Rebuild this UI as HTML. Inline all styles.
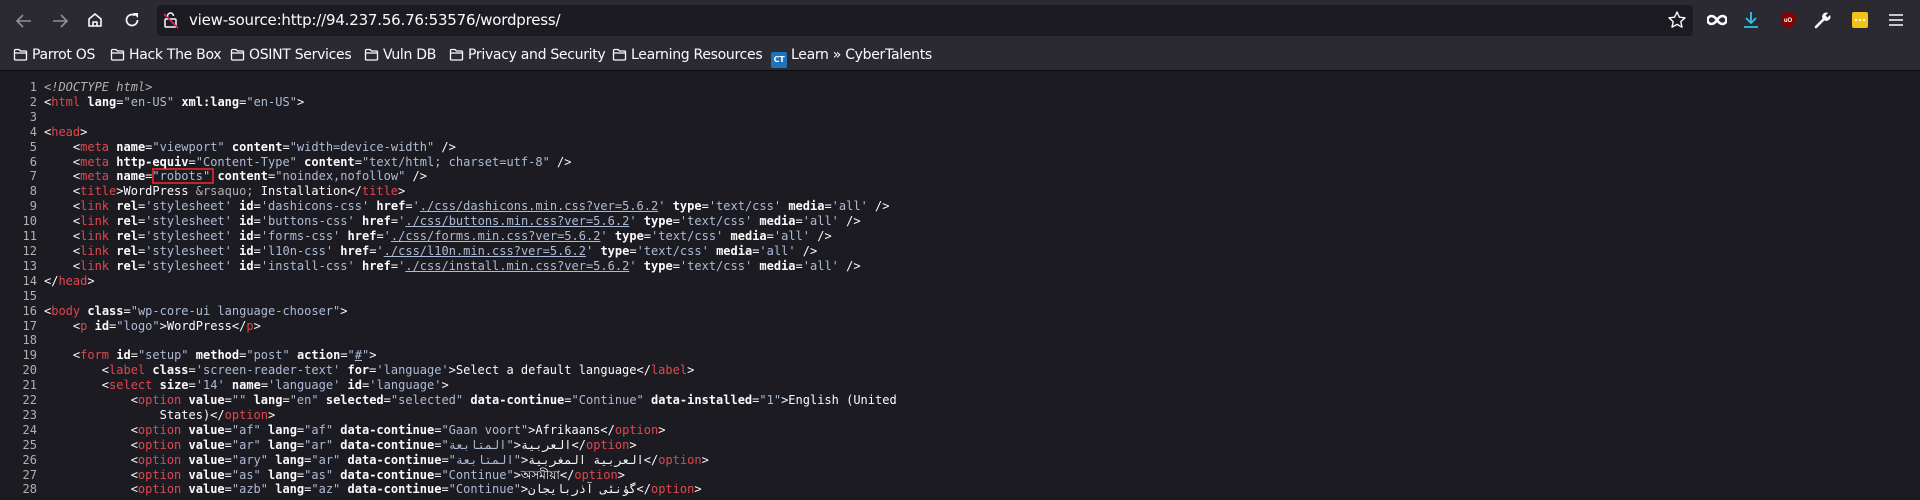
<!DOCTYPE html>
<html><head><meta charset="utf-8"><style>
*{margin:0;padding:0;box-sizing:border-box}
body{width:1920px;height:500px;overflow:hidden;background:#1c1b22;font-family:"Liberation Sans","DejaVu Sans",sans-serif;color:#fbfbfe;position:relative}
.tb{position:absolute;left:0;top:0;width:1920px;height:71px;background:#2b2a33;border-bottom:1px solid #0c0c0d}
.url{position:absolute;left:157px;top:5px;width:1536px;height:31px;background:#1c1b22;border-radius:4px}
.urltext{position:absolute;left:189px;top:11px;font-size:15px;color:#fbfbfe;font-family:"DejaVu Sans",sans-serif;letter-spacing:-0.2px}
.ic{position:absolute}
.bm{position:absolute;top:47px;font-size:14px;font-family:"DejaVu Sans",sans-serif;color:#fbfbfe;white-space:nowrap;letter-spacing:-0.3px}
.bm svg{vertical-align:-2px;margin-right:4px}
.code{position:absolute;left:0;top:80px;font-family:"DejaVu Sans Mono",monospace;font-size:12px;line-height:14.9px;white-space:pre;color:#fbfbfe}
.ln{display:inline-block;width:37px;text-align:right;color:#b1b1b3;margin-right:7px}
.t{color:#e0474f}
.a{font-weight:bold}
.v{color:#adbcd6}
.c{color:#b1b1b3;font-style:italic}
.e{color:#b1b1b3}
.u{color:#adbcd6;text-decoration:underline}
.ar{unicode-bidi:isolate}
</style></head><body>
<div class="tb"></div>
<svg class="ic" style="left:14px;top:12px" width="20" height="18" viewBox="0 0 20 18"><path d="M17 9H3M9 3L3 9l6 6" stroke="#8f8f9d" stroke-width="1.6" fill="none"/></svg>
<svg class="ic" style="left:50px;top:12px" width="20" height="18" viewBox="0 0 20 18"><path d="M3 9h14M11 3l6 6-6 6" stroke="#8f8f9d" stroke-width="1.6" fill="none"/></svg>
<svg class="ic" style="left:86px;top:11px" width="18" height="18" viewBox="0 0 18 18"><path d="M3 8l6-5 6 5v7H3z M7 15v-4h4v4" stroke="#fbfbfe" stroke-width="1.6" fill="none" stroke-linejoin="round"/></svg>
<svg class="ic" style="left:123px;top:11px" width="18" height="18" viewBox="0 0 18 18"><path d="M14.5 9A5.5 5.5 0 1 1 12 4.4" stroke="#fbfbfe" stroke-width="1.7" fill="none"/><path d="M10 2h5v5z" fill="#fbfbfe"/></svg>
<div class="url"></div>
<svg class="ic" style="left:163px;top:11px" width="16" height="18" viewBox="0 0 16 18"><rect x="2" y="8" width="11" height="8" rx="1" stroke="#fbfbfe" stroke-width="1.5" fill="none"/><path d="M4.5 8V5a3 3 0 0 1 6 0" stroke="#fbfbfe" stroke-width="1.5" fill="none"/><path d="M1 3l14 14" stroke="#e22850" stroke-width="1.6"/></svg>
<div class="urltext">view-source:http://94.237.56.76:53576/wordpress/</div>
<svg class="ic" style="left:1667px;top:10px" width="20" height="20" viewBox="0 0 20 20"><path d="M10 2l2.4 5.2 5.6.6-4.2 3.8 1.2 5.6L10 14.4 5 17.2l1.2-5.6L2 7.8l5.6-.6z" stroke="#fbfbfe" stroke-width="1.4" fill="none" stroke-linejoin="round"/></svg>
<svg class="ic" style="left:1707px;top:13px" width="20" height="14" viewBox="0 0 20 14"><path d="M10 7c-2-3-3.5-4-5.5-4a4 4 0 0 0 0 8c2 0 3.5-1 5.5-4zm0 0c2-3 3.5-4 5.5-4a4 4 0 0 1 0 8c-2 0-3.5-1-5.5-4z" stroke="#fbfbfe" stroke-width="2.6" fill="none"/></svg>
<svg class="ic" style="left:1742px;top:10px" width="18" height="20" viewBox="0 0 18 20"><path d="M9 2v11M4 8l5 5 5-5M2 17h14" stroke="#2bc6e8" stroke-width="1.8" fill="none"/></svg>
<svg class="ic" style="left:1780px;top:11px" width="16" height="18" viewBox="0 0 16 18"><path d="M8 1l7 2.5v6c0 4-3.5 6.5-7 8-3.5-1.5-7-4-7-8v-6z" fill="#800"/><text x="8" y="11" font-size="6" fill="#fff" text-anchor="middle" font-family="Liberation Sans" font-weight="bold">uO</text></svg>
<svg class="ic" style="left:1814px;top:11px" width="18" height="18" viewBox="0 0 18 18"><path d="M2 16l8-8" stroke="#fbfbfe" stroke-width="2.6" stroke-linecap="round"/><path d="M9 8a4 4 0 0 1 5-6l-2.5 2.5 2 2L16 4a4 4 0 0 1-6 5z" fill="#fbfbfe"/></svg>
<div class="ic" style="left:1852px;top:12px;width:16px;height:16px;background:#f0c419;border-radius:2px"><div style="position:absolute;left:3px;top:7px;width:10px;height:2px;border-top:2px dotted #fff"></div></div>
<svg class="ic" style="left:1888px;top:12px" width="16" height="16" viewBox="0 0 16 16"><path d="M1 3h14M1 8h14M1 13h14" stroke="#fbfbfe" stroke-width="1.5"/></svg>
<div class="bm" style="left:13px"><svg width="15" height="13" viewBox="0 0 15 13"><path d="M1.5 2.5a1 1 0 0 1 1-1h3.5l1.5 1.5h5a1 1 0 0 1 1 1v7a1 1 0 0 1-1 1h-10a1 1 0 0 1-1-1z M1.5 5h12" stroke="#fbfbfe" stroke-width="1.3" fill="none"/></svg>Parrot OS</div>
<div class="bm" style="left:110px"><svg width="15" height="13" viewBox="0 0 15 13"><path d="M1.5 2.5a1 1 0 0 1 1-1h3.5l1.5 1.5h5a1 1 0 0 1 1 1v7a1 1 0 0 1-1 1h-10a1 1 0 0 1-1-1z M1.5 5h12" stroke="#fbfbfe" stroke-width="1.3" fill="none"/></svg>Hack The Box</div>
<div class="bm" style="left:230px"><svg width="15" height="13" viewBox="0 0 15 13"><path d="M1.5 2.5a1 1 0 0 1 1-1h3.5l1.5 1.5h5a1 1 0 0 1 1 1v7a1 1 0 0 1-1 1h-10a1 1 0 0 1-1-1z M1.5 5h12" stroke="#fbfbfe" stroke-width="1.3" fill="none"/></svg>OSINT Services</div>
<div class="bm" style="left:364px"><svg width="15" height="13" viewBox="0 0 15 13"><path d="M1.5 2.5a1 1 0 0 1 1-1h3.5l1.5 1.5h5a1 1 0 0 1 1 1v7a1 1 0 0 1-1 1h-10a1 1 0 0 1-1-1z M1.5 5h12" stroke="#fbfbfe" stroke-width="1.3" fill="none"/></svg>Vuln DB</div>
<div class="bm" style="left:449px"><svg width="15" height="13" viewBox="0 0 15 13"><path d="M1.5 2.5a1 1 0 0 1 1-1h3.5l1.5 1.5h5a1 1 0 0 1 1 1v7a1 1 0 0 1-1 1h-10a1 1 0 0 1-1-1z M1.5 5h12" stroke="#fbfbfe" stroke-width="1.3" fill="none"/></svg>Privacy and Security</div>
<div class="bm" style="left:612px"><svg width="15" height="13" viewBox="0 0 15 13"><path d="M1.5 2.5a1 1 0 0 1 1-1h3.5l1.5 1.5h5a1 1 0 0 1 1 1v7a1 1 0 0 1-1 1h-10a1 1 0 0 1-1-1z M1.5 5h12" stroke="#fbfbfe" stroke-width="1.3" fill="none"/></svg>Learning Resources</div>
<div class="bm" style="left:771px"><span style="display:inline-block;width:16px;height:16px;background:#1e73be;border-radius:2px;vertical-align:-3px;margin-right:4px;font-size:8px;font-weight:bold;text-align:center;line-height:16px;color:#fff">CT</span>Learn » CyberTalents</div>
<div style="position:absolute;left:152px;top:168px;width:62px;height:16px;border:2px solid #c4232b"></div>
<div class="code"><span class="ln">1</span><span class="c">&lt;!DOCTYPE html&gt;</span>
<span class="ln">2</span>&lt;<span class="t">html</span> <span class="a">lang</span>=<span class="v">"en-US"</span> <span class="a">xml:lang</span>=<span class="v">"en-US"</span>&gt;
<span class="ln">3</span>
<span class="ln">4</span>&lt;<span class="t">head</span>&gt;
<span class="ln">5</span>    &lt;<span class="t">meta</span> <span class="a">name</span>=<span class="v">"viewport"</span> <span class="a">content</span>=<span class="v">"width=device-width"</span> /&gt;
<span class="ln">6</span>    &lt;<span class="t">meta</span> <span class="a">http-equiv</span>=<span class="v">"Content-Type"</span> <span class="a">content</span>=<span class="v">"text/html; charset=utf-8"</span> /&gt;
<span class="ln">7</span>    &lt;<span class="t">meta</span> <span class="a">name</span>=<span class="v">"robots"</span> <span class="a">content</span>=<span class="v">"noindex,nofollow"</span> /&gt;
<span class="ln">8</span>    &lt;<span class="t">title</span>&gt;WordPress <span class="e">&amp;rsaquo;</span> Installation&lt;/<span class="t">title</span>&gt;
<span class="ln">9</span>    &lt;<span class="t">link</span> <span class="a">rel</span>=<span class="v">'stylesheet'</span> <span class="a">id</span>=<span class="v">'dashicons-css'</span> <span class="a">href</span>=<span class="v">'</span><span class="u">./css/dashicons.min.css?ver=5.6.2</span><span class="v">'</span> <span class="a">type</span>=<span class="v">'text/css'</span> <span class="a">media</span>=<span class="v">'all'</span> /&gt;
<span class="ln">10</span>    &lt;<span class="t">link</span> <span class="a">rel</span>=<span class="v">'stylesheet'</span> <span class="a">id</span>=<span class="v">'buttons-css'</span> <span class="a">href</span>=<span class="v">'</span><span class="u">./css/buttons.min.css?ver=5.6.2</span><span class="v">'</span> <span class="a">type</span>=<span class="v">'text/css'</span> <span class="a">media</span>=<span class="v">'all'</span> /&gt;
<span class="ln">11</span>    &lt;<span class="t">link</span> <span class="a">rel</span>=<span class="v">'stylesheet'</span> <span class="a">id</span>=<span class="v">'forms-css'</span> <span class="a">href</span>=<span class="v">'</span><span class="u">./css/forms.min.css?ver=5.6.2</span><span class="v">'</span> <span class="a">type</span>=<span class="v">'text/css'</span> <span class="a">media</span>=<span class="v">'all'</span> /&gt;
<span class="ln">12</span>    &lt;<span class="t">link</span> <span class="a">rel</span>=<span class="v">'stylesheet'</span> <span class="a">id</span>=<span class="v">'l10n-css'</span> <span class="a">href</span>=<span class="v">'</span><span class="u">./css/l10n.min.css?ver=5.6.2</span><span class="v">'</span> <span class="a">type</span>=<span class="v">'text/css'</span> <span class="a">media</span>=<span class="v">'all'</span> /&gt;
<span class="ln">13</span>    &lt;<span class="t">link</span> <span class="a">rel</span>=<span class="v">'stylesheet'</span> <span class="a">id</span>=<span class="v">'install-css'</span> <span class="a">href</span>=<span class="v">'</span><span class="u">./css/install.min.css?ver=5.6.2</span><span class="v">'</span> <span class="a">type</span>=<span class="v">'text/css'</span> <span class="a">media</span>=<span class="v">'all'</span> /&gt;
<span class="ln">14</span>&lt;/<span class="t">head</span>&gt;
<span class="ln">15</span>
<span class="ln">16</span>&lt;<span class="t">body</span> <span class="a">class</span>=<span class="v">"wp-core-ui language-chooser"</span>&gt;
<span class="ln">17</span>    &lt;<span class="t">p</span> <span class="a">id</span>=<span class="v">"logo"</span>&gt;WordPress&lt;/<span class="t">p</span>&gt;
<span class="ln">18</span>
<span class="ln">19</span>    &lt;<span class="t">form</span> <span class="a">id</span>=<span class="v">"setup"</span> <span class="a">method</span>=<span class="v">"post"</span> <span class="a">action</span>=<span class="v">"</span><span class="u">#</span><span class="v">"</span>&gt;
<span class="ln">20</span>        &lt;<span class="t">label</span> <span class="a">class</span>=<span class="v">'screen-reader-text'</span> <span class="a">for</span>=<span class="v">'language'</span>&gt;Select a default language&lt;/<span class="t">label</span>&gt;
<span class="ln">21</span>        &lt;<span class="t">select</span> <span class="a">size</span>=<span class="v">'14'</span> <span class="a">name</span>=<span class="v">'language'</span> <span class="a">id</span>=<span class="v">'language'</span>&gt;
<span class="ln">22</span>            &lt;<span class="t">option</span> <span class="a">value</span>=<span class="v">""</span> <span class="a">lang</span>=<span class="v">"en"</span> <span class="a">selected</span>=<span class="v">"selected"</span> <span class="a">data-continue</span>=<span class="v">"Continue"</span> <span class="a">data-installed</span>=<span class="v">"1"</span>&gt;English (United
<span class="ln">23</span>                States)&lt;/<span class="t">option</span>&gt;
<span class="ln">24</span>            &lt;<span class="t">option</span> <span class="a">value</span>=<span class="v">"af"</span> <span class="a">lang</span>=<span class="v">"af"</span> <span class="a">data-continue</span>=<span class="v">"Gaan voort"</span>&gt;Afrikaans&lt;/<span class="t">option</span>&gt;
<span class="ln">25</span>            &lt;<span class="t">option</span> <span class="a">value</span>=<span class="v">"ar"</span> <span class="a">lang</span>=<span class="v">"ar"</span> <span class="a">data-continue</span>=<span class="v">"<span class="ar">المتابعة</span>"</span>&gt;<span class="ar">العربية</span>&lt;/<span class="t">option</span>&gt;
<span class="ln">26</span>            &lt;<span class="t">option</span> <span class="a">value</span>=<span class="v">"ary"</span> <span class="a">lang</span>=<span class="v">"ar"</span> <span class="a">data-continue</span>=<span class="v">"<span class="ar">المتابعة</span>"</span>&gt;<span class="ar">العربية المغربية</span>&lt;/<span class="t">option</span>&gt;
<span class="ln">27</span>            &lt;<span class="t">option</span> <span class="a">value</span>=<span class="v">"as"</span> <span class="a">lang</span>=<span class="v">"as"</span> <span class="a">data-continue</span>=<span class="v">"Continue"</span>&gt;অসমীয়া&lt;/<span class="t">option</span>&gt;
<span class="ln">28</span>            &lt;<span class="t">option</span> <span class="a">value</span>=<span class="v">"azb"</span> <span class="a">lang</span>=<span class="v">"az"</span> <span class="a">data-continue</span>=<span class="v">"Continue"</span>&gt;<span class="ar">گؤنئی آذربایجان</span>&lt;/<span class="t">option</span>&gt;
</div>
</body></html>
